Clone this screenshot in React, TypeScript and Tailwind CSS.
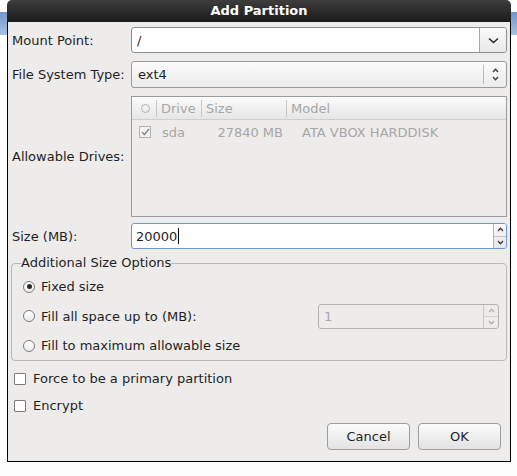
import React from "react";

function ChevronDown({ className = "" }: { className?: string }) {
  return (
    <svg width="11" height="7" viewBox="0 0 11 7" className={className}>
      <path d="M1 1.5 L5.5 5.5 L10 1.5" fill="none" stroke="currentColor" strokeWidth="1.6" />
    </svg>
  );
}

function SmallChevron({ up, color = "#3a3a3a" }: { up?: boolean; color?: string }) {
  return (
    <svg width="7" height="5" viewBox="0 0 7 5">
      <path
        d={up ? "M1 4 L3.5 1.2 L6 4" : "M1 1 L3.5 3.8 L6 1"}
        fill="none"
        stroke={color}
        strokeWidth="1.3"
      />
    </svg>
  );
}

function Radio({ checked }: { checked?: boolean }) {
  return (
    <span className="flex h-[12px] w-[12px] items-center justify-center rounded-full border border-[#7b7b7b] bg-gradient-to-b from-[#ffffff] to-[#ececec]">
      {checked && <span className="h-[5px] w-[5px] rounded-full bg-[#2a2a2a]" />}
    </span>
  );
}

function Checkbox() {
  return <span className="block h-[12px] w-[12px] rounded-[1px] border border-[#7b7b7b] bg-white" />;
}

function Label({ children }: { children: React.ReactNode }) {
  return <div className="flex w-[123px] items-center pl-[4px]">{children}</div>;
}

export default function App() {
  return (
    <div className="flex h-[476px] w-[517px] items-start bg-[#fdfdfd] font-['DejaVu_Sans',sans-serif] text-[13px] leading-none text-[#1f1f1f]">
      <div className="mt-[12px] h-[23px] w-[7px] shrink-0 bg-gradient-to-b from-[#7096cb] to-[#a8c1e3]" />

      <div className="flex h-[462px] w-[504px] shrink-0 flex-col">
        <div className="flex h-[22px] items-center justify-center rounded-t-[5px] bg-gradient-to-b from-[#3d3d3d] to-[#1b1b1b] pb-[1px] text-[13px] font-bold text-white">
          Add Partition
        </div>

        <div className="flex flex-1 flex-col border-x border-b border-black bg-[#edeceb] pr-[3px] pt-[5px]">
          {/* Mount point */}
          <div className="flex h-[26px]">
            <Label>Mount Point:</Label>
            <div className="flex flex-1 rounded-[3px] border border-[#8f8f8f] bg-white">
              <div className="flex flex-1 items-center pl-[5px]">/</div>
              <div className="flex w-[27px] items-center justify-center rounded-r-[3px] border-l border-[#a9a9a9] bg-gradient-to-b from-[#fafafa] to-[#e9e9e9] text-[#2a2a2a]">
                <ChevronDown />
              </div>
            </div>
          </div>

          {/* File system type */}
          <div className="mt-[8px] flex h-[27px]">
            <Label>File System Type:</Label>
            <div className="flex flex-1 items-center rounded-[3px] border border-[#9a9a9a] bg-gradient-to-b from-[#fbfbfb] to-[#ececec]">
              <div className="flex-1 pl-[6px]">ext4</div>
              <div className="h-[19px] w-px bg-[#b9b9b9]" />
              <div className="flex w-[22px] flex-col items-center gap-[3px]">
                <SmallChevron up />
                <SmallChevron />
              </div>
            </div>
          </div>

          {/* Allowable drives */}
          <div className="mt-[8px] flex h-[121px]">
            <Label>Allowable Drives:</Label>
            <div className="flex flex-1 flex-col border border-[#9c9c9c] bg-[#edeceb] text-[#a6a6a6]">
              <div className="flex h-[23px] items-center border-b border-[#cfcfcf] bg-gradient-to-b from-[#fbfbfb] to-[#e6e6e6]">
                <div className="flex w-[24px] justify-center pl-[2px]">
                  <span className="h-[9px] w-[9px] rounded-full border border-[#b2b2b2]" />
                </div>
                <div className="h-[17px] w-px bg-[#c6c6c6]" />
                <div className="w-[44px] pl-[4px]">Drive</div>
                <div className="h-[17px] w-px bg-[#c6c6c6]" />
                <div className="w-[84px] pl-[4px]">Size</div>
                <div className="h-[17px] w-px bg-[#c6c6c6]" />
                <div className="pl-[4px]">Model</div>
              </div>
              <div className="flex h-[24px] items-center">
                <div className="flex w-[24px] justify-center pl-[2px]">
                  <span className="flex h-[12px] w-[12px] items-center justify-center border border-[#b2b2b2] bg-[#f4f4f4]">
                    <svg width="9" height="8" viewBox="0 0 9 8">
                      <path d="M1 4 L3.4 6.6 L8 1" fill="none" stroke="#8c8c8c" strokeWidth="1.5" />
                    </svg>
                  </span>
                </div>
                <div className="w-[56px] pl-[6px]">sda</div>
                <div className="w-[71px] text-right">27840 MB</div>
                <div className="pl-[19px]">ATA VBOX HARDDISK</div>
              </div>
            </div>
          </div>

          {/* Size */}
          <div className="mt-[6px] flex h-[26px]">
            <Label>Size (MB):</Label>
            <div className="flex flex-1 rounded-[3px] border border-[#6f98d0] bg-white">
              <div className="flex flex-1 items-center pl-[4px]">
                20000<span className="ml-[1px] h-[16px] w-px bg-black" />
              </div>
              <div className="flex w-[13px] flex-col overflow-hidden rounded-r-[3px] border-l border-[#b5b5b5] bg-gradient-to-b from-[#fafafa] to-[#e6e6e6]">
                <div className="flex flex-1 items-center justify-center border-b border-[#c3c3c3]">
                  <SmallChevron up />
                </div>
                <div className="flex flex-1 items-center justify-center">
                  <SmallChevron />
                </div>
              </div>
            </div>
          </div>

          {/* Additional size options */}
          <fieldset className="ml-[3px] mt-[6px] h-[106px] rounded-[4px] border border-[#b9b8b6] px-[7px] pt-0">
            <legend className="ml-[2px] px-0 pb-[1px] text-[13px] leading-[16px]">Additional Size Options</legend>
            <div className="flex h-[29px] items-center gap-[6px] pl-[4px]">
              <Radio checked />
              <span>Fixed size</span>
            </div>
            <div className="flex h-[30px] items-center gap-[6px] pl-[4px]">
              <Radio />
              <span className="flex-1">Fill all space up to (MB):</span>
              <div className="flex h-[25px] w-[181px] rounded-[3px] border border-[#b3b3b3] bg-[#edeceb] text-[#a7a7a7]">
                <div className="flex flex-1 items-center pl-[5px]">1</div>
                <div className="flex w-[15px] flex-col border-l border-[#c8c8c8]">
                  <div className="flex flex-1 items-center justify-center border-b border-[#d3d3d3]">
                    <SmallChevron up color="#b0b0b0" />
                  </div>
                  <div className="flex flex-1 items-center justify-center">
                    <SmallChevron color="#b0b0b0" />
                  </div>
                </div>
              </div>
            </div>
            <div className="flex h-[29px] items-center gap-[6px] pl-[4px]">
              <Radio />
              <span>Fill to maximum allowable size</span>
            </div>
          </fieldset>

          {/* Checkboxes */}
          <div className="mt-[4px] flex h-[27px] items-center gap-[7px] pl-[6px]">
            <Checkbox />
            <span>Force to be a primary partition</span>
          </div>
          <div className="flex h-[27px] items-center gap-[7px] pl-[6px]">
            <Checkbox />
            <span>Encrypt</span>
          </div>

          {/* Buttons */}
          <div className="mt-[4px] flex justify-end gap-[8px] pr-[6px]">
            <button className="flex h-[27px] w-[83px] items-center justify-center rounded-[4px] border border-[#9d9d9d] bg-gradient-to-b from-[#fbfbfb] to-[#e3e3e3] text-[#1f1f1f]">
              Cancel
            </button>
            <button className="flex h-[27px] w-[83px] items-center justify-center rounded-[4px] border border-[#9d9d9d] bg-gradient-to-b from-[#fbfbfb] to-[#e3e3e3] text-[#1f1f1f]">
              OK
            </button>
          </div>
        </div>
      </div>

      <div className="mt-[12px] h-[23px] flex-1 bg-gradient-to-b from-[#7096cb] to-[#a8c1e3]" />
    </div>
  );
}
